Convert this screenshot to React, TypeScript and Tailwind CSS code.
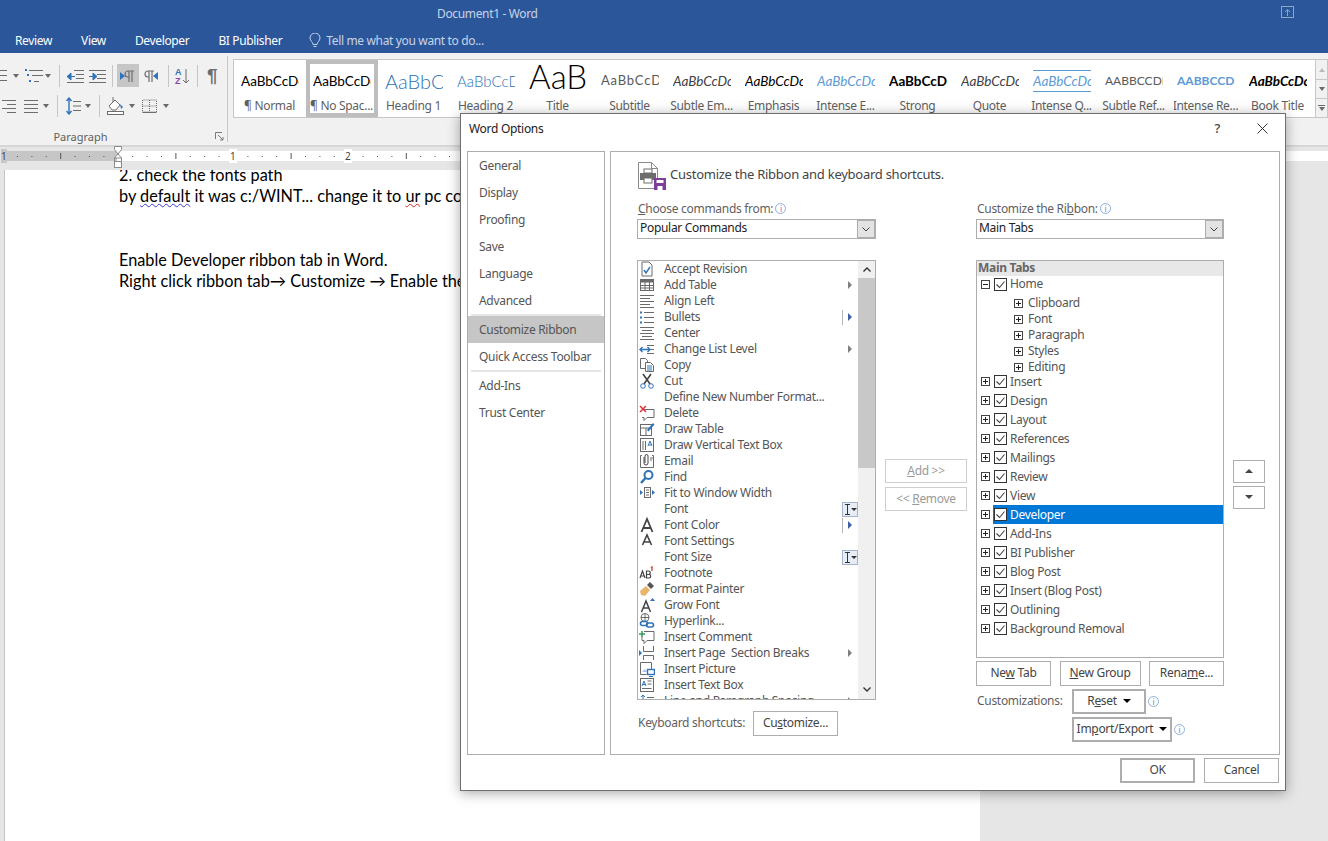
import type { ReactNode } from 'react'

const STYLES = [
  { label: '¶ Normal', cls: 'text-[13.5px] text-black' },
  { label: '¶ No Spac...', cls: 'text-[13.5px] text-black', selected: true },
  { label: 'Heading 1', cls: 'text-[20px] text-[#2e74b5] font-light' },
  { label: 'Heading 2', cls: 'text-[15px] text-[#2e74b5] font-light' },
  { label: 'Title', cls: 'text-[33px] text-black font-light leading-[33px] pb-[10px]' },
  { label: 'Subtitle', cls: 'text-[13px] text-[#5a5a5a] tracking-[0.8px]' },
  { label: 'Subtle Em...', cls: 'text-[13.5px] text-[#404040] italic' },
  { label: 'Emphasis', cls: 'text-[13.5px] text-black italic' },
  { label: 'Intense E...', cls: 'text-[13.5px] text-[#5b9bd5] italic' },
  { label: 'Strong', cls: 'text-[13.5px] text-black font-bold' },
  { label: 'Quote', cls: 'text-[13.5px] text-[#404040] italic' },
  { label: 'Intense Q...', cls: 'text-[13.5px] text-[#5b9bd5] italic border-y border-[#5b9bd5]' },
  { label: 'Subtle Ref...', cls: 'text-[12px] text-[#5a5a5a]' },
  { label: 'Intense Re...', cls: 'text-[12px] text-[#5b9bd5] font-bold' },
  { label: 'Book Title', cls: 'text-[13.5px] text-black font-bold italic' },
]

const PREVIEW: Record<string, string> = {
  'Heading 1': 'AaBbCc',
  'Heading 2': 'AaBbCcD',
  Title: 'AaB',
  'Subtle Ref...': 'AABBCCDE',
  'Intense Re...': 'AABBCCDE',
}

const NAV = [
  { label: 'General' },
  { label: 'Display' },
  { label: 'Proofing' },
  { label: 'Save' },
  { label: 'Language' },
  { label: 'Advanced', line: true },
  { label: 'Customize Ribbon', active: true },
  { label: 'Quick Access Toolbar', line: true },
  { label: 'Add-Ins' },
  { label: 'Trust Center' },
]

type Cmd = { label: string; icon?: string; arrow?: boolean; split?: boolean; beam?: boolean }

const COMMANDS: Cmd[] = [
  { label: 'Accept Revision', icon: 'accept' },
  { label: 'Add Table', icon: 'table', arrow: true },
  { label: 'Align Left', icon: 'left' },
  { label: 'Bullets', icon: 'bullets', split: true },
  { label: 'Center', icon: 'center' },
  { label: 'Change List Level', icon: 'level', arrow: true },
  { label: 'Copy', icon: 'copy' },
  { label: 'Cut', icon: 'cut' },
  { label: 'Define New Number Format...' },
  { label: 'Delete', icon: 'delete' },
  { label: 'Draw Table', icon: 'draw' },
  { label: 'Draw Vertical Text Box', icon: 'vbox' },
  { label: 'Email', icon: 'email' },
  { label: 'Find', icon: 'find' },
  { label: 'Fit to Window Width', icon: 'fit' },
  { label: 'Font', beam: true },
  { label: 'Font Color', icon: 'fontcolor', split: true },
  { label: 'Font Settings', icon: 'fontsettings' },
  { label: 'Font Size', beam: true },
  { label: 'Footnote', icon: 'footnote' },
  { label: 'Format Painter', icon: 'painter' },
  { label: 'Grow Font', icon: 'grow' },
  { label: 'Hyperlink...', icon: 'link' },
  { label: 'Insert Comment', icon: 'comment' },
  { label: 'Insert Page  Section Breaks', icon: 'breaks', arrow: true },
  { label: 'Insert Picture', icon: 'picture' },
  { label: 'Insert Text Box', icon: 'textbox' },
  { label: 'Line and Paragraph Spacing', icon: 'spacing', arrow: true },
]

const TABS = ['Insert', 'Design', 'Layout', 'References', 'Mailings', 'Review', 'View', 'Developer', 'Add-Ins', 'BI Publisher', 'Blog Post', 'Insert (Blog Post)', 'Outlining', 'Background Removal']

const GROUPS = ['Clipboard', 'Font', 'Paragraph', 'Styles', 'Editing']

function Glyph({ name }: { name: string }) {
  const g = '#6a6a6a'
  const b = '#2f73b8'
  switch (name) {
    case 'accept':
      return <><path d="M3 1h7l3 3v11H3z" fill="none" stroke={g} /><path d="M5 9l2 3 4-6" fill="none" stroke={b} strokeWidth="1.4" /></>
    case 'table':
      return <><rect x="1.5" y="2.5" width="13" height="11" fill="#fff" stroke={g} /><rect x="1.5" y="2.5" width="13" height="3" fill={g} /><path d="M1.5 8.5h13M1.5 11h13M6 5v8M10.5 5v8" stroke={g} /></>
    case 'left':
      return <path d="M1 2.5h14M1 5.5h10M1 8.5h14M1 11.5h10M1 14.5h14" stroke={g} />
    case 'center':
      return <path d="M1 2.5h14M3 5.5h10M1 8.5h14M3 11.5h10M1 14.5h14" stroke={g} />
    case 'bullets':
      return <><path d="M5 3.5h10M5 8.5h10M5 13.5h10" stroke={g} /><path d="M1 3.5h2M1 8.5h2M1 13.5h2" stroke={b} strokeWidth="2" /></>
    case 'level':
      return <><path d="M8 4.5h7M10 8.5h5M8 12.5h7" stroke={g} /><path d="M1 8.5h10M3.5 6L1 8.5 3.5 11M8.5 6L11 8.5 8.5 11" fill="none" stroke={b} strokeWidth="1.4" /></>
    case 'copy':
      return <><path d="M1.5 1.5h5l2 2v8h-7z" fill="#fff" stroke={g} /><path d="M6.5 5.5h5l3 3v6h-8z" fill="#fff" stroke={g} /><path d="M8 9h5M8 11h5M8 13h5" stroke={b} /></>
    case 'cut':
      return <><path d="M4 1l7 10M12 1L5 11" stroke="#444" strokeWidth="1.6" /><circle cx="4" cy="13" r="2.3" fill="none" stroke={b} /><circle cx="12" cy="13" r="2.3" fill="none" stroke={b} /></>
    case 'delete':
      return <><path d="M4 4.5h11v8H8l-3 3v-3H3" fill="none" stroke={g} /><path d="M1 1l6 6M7 1L1 7" stroke="#d33" strokeWidth="1.5" /></>
    case 'draw':
      return <><rect x="1.5" y="3.5" width="11" height="11" fill="#fff" stroke={g} /><path d="M1.5 7h11M7 7v7.500" stroke={g} /><path d="M8 9l6-7 1.500 1.500-6 7z" fill={b} /></>
    case 'vbox':
      return <><rect x="1.5" y="1.500" width="13" height="13" fill="#fff" stroke={g} /><path d="M4 4v9M6.500 4v9" stroke={g} /><path d="M9 9l2-5 2 5M10 8h2" fill="none" stroke={b} /></>
    case 'email':
      return <><path d="M3 2.500H1.500v12h13v-12H13" fill="none" stroke={g} /><path d="M5 4v6a2 2 0 004 0V3a1.500 1.500 0 00-3 0v7" fill="none" stroke="#444" /><path d="M11 5h3M11 7h2" stroke={g} /></>
    case 'find':
      return <><circle cx="9.500" cy="6" r="4" fill="#fff" stroke={b} strokeWidth="2" /><path d="M6.500 9L2 14" stroke={b} strokeWidth="2.500" /></>
    case 'fit':
      return <><rect x="5.500" y="2.500" width="6" height="10" fill="#fff" stroke={g} /><path d="M7 5h3M7 7.500h3M7 10h3" stroke={g} /><path d="M4 7.500L1 5v5zM13 5v5l3-2.500z" fill={b} /></>
    case 'fontcolor':
      return <path d="M2.500 15L8 2l5.500 13M4.500 11h7" fill="none" stroke="#444" strokeWidth="1.800" />
    case 'fontsettings':
      return <path d="M3.500 12L8 2l4.500 10M5 9h6" fill="none" stroke="#444" strokeWidth="1.600" />
    case 'footnote':
      return <><path d="M1 13l2.500-7L6 13M1.800 11h3.400M7.500 6v7h2.500a1.700 1.700 0 000-3.500H7.500h2a1.700 1.700 0 000-3.500z" fill="none" stroke="#444" strokeWidth="1.200" /><path d="M13 6V2l-1 1" fill="none" stroke="#c33" strokeWidth="1.200" /></>
    case 'painter':
      return <><path d="M1 10l6-5 4 4-5 6-4-1z" fill="#e8b56a" /><path d="M8 4l4 4 3-3-4-4z" fill="#555" /></>
    case 'grow':
      return <><path d="M2.500 15L7 4l4.500 11M4 11h6" fill="none" stroke="#444" strokeWidth="1.500" /><path d="M11 4l2.500-3L16 4z" fill={b} /></>
    case 'link':
      return <><circle cx="6" cy="4.500" r="4" fill="none" stroke={g} /><path d="M2 4.500h8M6 .5v8" stroke={g} /><rect x="1.500" y="8.500" width="7" height="4" rx="2" fill="none" stroke={b} strokeWidth="1.600" /><rect x="7.500" y="10" width="7" height="4" rx="2" fill="none" stroke={b} strokeWidth="1.600" /></>
    case 'comment':
      return <><path d="M5 2.500h10v9H8l-3 3v-3H3V7" fill="none" stroke={g} /><path d="M0 5h6M3 2v6" stroke="#3a9a5a" strokeWidth="1.500" /></>
    case 'breaks':
      return <><path d="M4.500 1v5.500h10V1M4.500 15V10.500h10V15" fill="none" stroke={g} /><path d="M0 5v6l3-3z" fill={b} /></>
    case 'picture':
      return <><path d="M1.500 1.500h11v9M1.500 1.500v12h6" fill="none" stroke={g} /><path d="M3 11l3-3 2 3z" fill="#aac6e6" /><rect x="8.500" y="8.500" width="7" height="5" fill="#fff" stroke={b} strokeWidth="1.400" /><path d="M10 15.500h4" stroke={b} /></>
    case 'textbox':
      return <><rect x="1.500" y="1.500" width="13" height="13" fill="#fff" stroke={g} /><path d="M3 9l2-5 2 5M3.800 7.500h2.400" fill="none" stroke={b} /><path d="M8.500 4h4M8.500 7h4M3 11.500h9.500" stroke={g} /></>
    case 'spacing':
      return <><path d="M4 2v10M2 4l2-2 2 2" fill="none" stroke={b} /><path d="M8 4.500h7M8 8h7" stroke={g} /></>
  }
  return null
}

function CmdIcon({ name }: { name: string }) {
  return (
    <svg className="shrink-0" width="16" height="16" viewBox="0 0 16 16">
      <Glyph name={name} />
    </svg>
  )
}

function Caret({ className = '' }: { className?: string }) {
  return (
    <svg className={`shrink-0 ${className}`} width="6" height="4" viewBox="0 0 6 4">
      <path d="M0 0h6L3 4z" fill="#6a6a6a" />
    </svg>
  )
}

function Sep({ className = '' }: { className?: string }) {
  return <div className={`w-px h-[22px] bg-[#c6c6c6] shrink-0 ${className}`} />
}

function Rib({ w, children, className = '' }: { w: number; children: ReactNode; className?: string }) {
  return (
    <svg className={`shrink-0 ${className}`} width={w} height="18" viewBox={`0 0 ${w} 18`}>
      {children}
    </svg>
  )
}

function ParagraphGroup() {
  const g = '#6d6d6d'
  const b = '#2f73b8'
  return (
    <div className="w-[228px] shrink-0 h-[86px] border-r border-[#c6c6c6] mt-[3px] relative">
      <div className="flex items-center h-[23px] mt-[8px]">
        <Rib w={7}><path d="M0 3.500h7M0 8.500h7M0 13.500h7" stroke={g} /></Rib>
        <Caret className="ml-[6px]" />
        <Rib w={19} className="ml-[5px]"><path d="M5 3.500h14M8 8.500h11M10 14.500h5" stroke={g} /><path d="M1 3h2M3 8h2M5 14h2" stroke={b} strokeWidth="2" /></Rib>
        <Caret className="ml-[2px]" />
        <Sep className="ml-[8px]" />
        <Rib w={17} className="ml-[7px]"><path d="M7 3.500h10M9 7.500h8M9 11.500h8M0 15.500h17" stroke={g} /><path d="M0 9.500L4 6v7zM4 9.500h4" fill={b} stroke={b} /></Rib>
        <Rib w={17} className="ml-[5px]"><path d="M0 3.500h17M8 7.500h9M8 11.500h9M0 15.500h17" stroke={g} /><path d="M8 9.500L4 6v7zM0 9.500h4" fill={b} stroke={b} /></Rib>
        <Sep className="ml-[6px]" />
        <div className="w-[22px] h-[23px] bg-[#c6c6c6] ml-[4px] flex items-center justify-center shrink-0">
          <Rib w={16}><path d="M0 5l5 4-5 4z" fill={b} /><path d="M9 4H8a3 3 0 000 6h1M9 4v11M12 4v11M8 4h6" fill="none" stroke={g} strokeWidth="1.200" /></Rib>
        </div>
        <Rib w={14} className="ml-[5px]"><path d="M5 4H4a3 3 0 000 6h1M5 4v11M8 4v11M4 4h6" fill="none" stroke={g} strokeWidth="1.200" /><path d="M14 5l-5 4 5 4z" fill={b} /></Rib>
        <Sep className="ml-[10px]" />
        <Rib w={15} className="ml-[6px]"><text x="0" y="8" fontSize="9" fontWeight="700" fill={b} fontFamily="Liberation Sans">A</text><text x="0" y="17" fontSize="9" fontWeight="700" fill="#8e44ad" fontFamily="Liberation Sans">Z</text><path d="M11 2v14M8 13l3 3 3-3" fill="none" stroke={g} /></Rib>
        <Sep className="ml-[7px]" />
        <span className="ml-[9px] text-[19px] leading-none font-bold text-[#6d6d6d]" style={{ fontFamily: '"Liberation Sans", sans-serif' }}>¶</span>
      </div>
      <div className="flex items-center h-[24px] mt-[7px]">
        <Rib w={14} className="ml-[2px]"><path d="M0 3.500h14M5 7.500h9M0 11.500h14M5 15.500h9" stroke={g} /></Rib>
        <Rib w={14} className="ml-[8px]"><path d="M0 3.500h14M0 7.500h14M0 11.500h14M0 15.500h14" stroke={g} /></Rib>
        <Caret className="ml-[5px]" />
        <Sep className="ml-[8px]" />
        <Rib w={15} className="ml-[8px]"><path d="M7 4.500h8M7 9h8M7 13.500h8" stroke={g} /><path d="M3 1v16M.5 4L3 1l2.500 3M.5 14L3 17l2.500-3" fill="none" stroke={b} strokeWidth="1.400" /></Rib>
        <Caret className="ml-[4px]" />
        <Sep className="ml-[8px]" />
        <Rib w={17} className="ml-[7px]"><path d="M2 9l6-6 5 5-4 5H5z" fill="#fff" stroke={g} /><path d="M6 0v5" stroke={g} /><path d="M13 7l3 3-2 2z" fill={b} /><rect x="0.500" y="14.500" width="16" height="3" fill="#fff" stroke={g} /></Rib>
        <Caret className="ml-[5px]" />
        <Rib w={15} className="ml-[7px]"><path d="M.5 3v12h14V3z" fill="none" stroke={g} strokeDasharray="1 1" /><path d="M7.500 3v12M.5 9h14" stroke={g} strokeDasharray="1 1" /><path d="M.5 15.500h14" stroke={g} /></Rib>
        <Caret className="ml-[6px]" />
      </div>
      <div className="flex items-center justify-center w-[161px] h-[14px] mt-[12px] text-[11px] text-[#5f5f5f]">Paragraph</div>
      <svg className="absolute left-[215px] bottom-[1px]" width="9" height="9" viewBox="0 0 9 9">
        <path d="M.5 7V.5H7M3 3l5 5M5 8h3V5" fill="none" stroke="#7a7a7a" />
      </svg>
    </div>
  )
}

function Gallery() {
  return (
    <div className="w-[1095px] shrink-0 ml-[5px] mt-[6px] h-[59px] flex border border-[#c6c6c6] bg-white">
      <div className="flex w-[1081px] overflow-hidden">
        {STYLES.map(s => (
          <div key={s.label} className={`w-[72px] shrink-0 h-[57px] flex flex-col items-center overflow-hidden ${s.selected ? 'border-[4px] border-[#bdbdbd]' : 'border-[4px] border-transparent'}`}>
            <div className="h-[34px] w-[58px] shrink-0 overflow-hidden flex items-center whitespace-nowrap" style={{ fontFamily: 'Lato, sans-serif' }}>
              <span className={s.cls}>{PREVIEW[s.label] ?? 'AaBbCcDc'}</span>
            </div>
            <div className="text-[12px] leading-[15px] tracking-[-0.3px] text-[#5f5f5f] whitespace-nowrap pr-px">{s.label}</div>
          </div>
        ))}
      </div>
      <div className="flex-1 flex flex-col border-l border-[#c6c6c6] bg-[#f1f1f1]">
        <div className="h-[20px] flex items-center justify-center border-b border-[#c6c6c6]"><span className="w-0 h-0 border-x-[3px] border-x-transparent border-b-[4px] border-b-[#bbb]" /></div>
        <div className="h-[19px] flex items-center justify-center border-b border-[#c6c6c6]"><Caret /></div>
        <div className="flex-1 flex flex-col items-center justify-center gap-[1px]"><div className="w-[7px] h-px bg-[#666]" /><Caret /></div>
      </div>
    </div>
  )
}

function Ruler() {
  const ticks: number[] = []
  for (let x = 3.1; x < 460; x += 14.4) ticks.push(x)
  return (
    <div className="h-[25px] bg-[#e6e6e6] border-t-2 border-[#d6d6d6] pt-[4px] relative">
      <div className="flex h-[10px]">
        <div className="w-[3px] bg-[#e6e6e6]" />
        <div className="w-[114px] bg-[#c6c6c6]" />
        <div className="flex-1 bg-white" />
      </div>
      <svg className="absolute left-0 top-[4px]" width="460" height="10" viewBox="0 0 460 10">
        {ticks.map((x, i) => (
          i % 8 === 4
            ? <path key={x} d={`M${x.toFixed(1)} 2v6`} stroke="#555" />
            : <path key={x} d={`M${x.toFixed(1)} 5v1`} stroke="#555" />
        ))}
      </svg>
      <span className="absolute left-[1px] top-[2px] text-[10px] leading-[14px] text-[#444] bg-[#c6c6c6]">1</span>
      <span className="absolute left-[229px] top-[2px] text-[10px] leading-[14px] text-[#444] bg-white px-px">1</span>
      <span className="absolute left-[344px] top-[2px] text-[10px] leading-[14px] text-[#444] bg-white px-px">2</span>
      <svg className="absolute left-[114px] top-[-1px]" width="8" height="24" viewBox="0 0 8 24">
        <path d="M.5.5h7v3L4 8 7.500 12H.5L4 8 .5 3.500z" fill="#fff" stroke="#8a8a8a" />
        <rect x="0.500" y="15.500" width="7" height="6" fill="#fff" stroke="#8a8a8a" />
        <path d="M.5 12v3.500M7.500 12v3.500" stroke="#8a8a8a" />
      </svg>
    </div>
  )
}

function InfoDot() {
  return (
    <span className="inline-flex w-[11px] h-[11px] rounded-full border border-[#8fb0dc] items-center justify-center shrink-0">
      <span className="text-[8px] leading-none text-[#5a86c0]">i</span>
    </span>
  )
}

function Btn({ className = '', children, disabled }: { className?: string; children: ReactNode; disabled?: boolean }) {
  return (
    <div className={`flex items-center justify-center pb-px border ${disabled ? 'border-[#cfcfcf] text-[#9a9a9a]' : 'border-[#adadad] text-[#444]'} bg-white ${className}`}>
      {children}
    </div>
  )
}

function Combo({ value, label }: { value: string; label: ReactNode }) {
  return (
    <>
      <div className="h-[18px] pb-px pl-px flex items-center gap-[2px] text-[#5f5f5f]">{label}<InfoDot /></div>
      <div className="mt-[1px] h-[20px] flex border border-[#adadad] bg-white">
        <div className="flex-1 pl-[2px] leading-[16px] text-[#222]">{value}</div>
        <div className="w-[18px] bg-[#e3e3e3] border-l border-[#adadad] border-y border-r flex items-center justify-center">
          <svg width="8" height="5" viewBox="0 0 8 5"><path d="M.5.5L4 4 7.500.5" fill="none" stroke="#444" /></svg>
        </div>
      </div>
    </>
  )
}

function CommandList() {
  return (
    <div className="mt-[21px] h-[440px] flex border border-[#adadad] bg-white overflow-hidden">
      <div className="flex-1 min-w-0">
        {COMMANDS.map(c => (
          <div key={c.label} className="h-[16px] flex items-center relative">
            <div className="w-[16px] ml-px shrink-0 flex justify-center">{c.icon && <CmdIcon name={c.icon} />}</div>
            <span className="ml-[9px] text-[#555] whitespace-pre leading-[16px]">{c.label}</span>
            {c.arrow && <span className="absolute right-[6px] w-0 h-0 border-y-[4px] border-y-transparent border-l-[4px] border-l-[#808080]" />}
            {c.split && (
              <>
                <span className="absolute right-[15px] w-px h-[15px] bg-[#b5b5b5]" />
                <span className="absolute right-[6px] w-0 h-0 border-y-[4px] border-y-transparent border-l-[4px] border-l-[#3f5fa8]" />
              </>
            )}
            {c.beam && (
              <span className="absolute right-0 w-[16px] h-[15px] border border-[#a8b4cc] bg-[#e8ecf5] flex items-center pl-[2px] gap-px text-[#444]">
                <svg width="5" height="11" viewBox="0 0 5 11"><path d="M0 .5h5M0 10.500h5M2.500 .5v10" stroke="#333" /></svg>
                <span className="w-0 h-0 border-x-[3px] border-x-transparent border-t-[3px] border-t-[#333]" />
              </span>
            )}
          </div>
        ))}
      </div>
      <div className="w-[17px] shrink-0 bg-[#f0f0f0] flex flex-col">
        <div className="h-[17px] flex items-center justify-center">
          <svg width="8" height="5" viewBox="0 0 8 5"><path d="M.5 4.500L4 1l3.500 3.500" fill="none" stroke="#333" strokeWidth="1.400" /></svg>
        </div>
        <div className="h-[190px] bg-[#c8c8c8] mx-0" />
        <div className="flex-1" />
        <div className="h-[20px] flex items-center justify-center">
          <svg width="8" height="5" viewBox="0 0 8 5"><path d="M.5.5L4 4l3.500-3.500" fill="none" stroke="#333" strokeWidth="1.400" /></svg>
        </div>
      </div>
    </div>
  )
}

function Expander({ open }: { open?: boolean }) {
  return (
    <svg className="shrink-0" width="9" height="9" viewBox="0 0 9 9">
      <rect x="0.500" y="0.500" width="8" height="8" fill="#fff" stroke="#444" />
      <path d="M2 4.500h5" stroke="#222" />
      {!open && <path d="M4.500 2v5" stroke="#222" />}
    </svg>
  )
}

function Check() {
  return (
    <svg className="shrink-0" width="13" height="13" viewBox="0 0 13 13">
      <rect x="0.500" y="0.500" width="12" height="12" fill="#fff" stroke="#333" />
      <path d="M2.500 6.500l3 3 5-6" fill="none" stroke="#444" strokeWidth="1.100" />
    </svg>
  )
}

function TabTree() {
  return (
    <div className="mt-[21px] h-[398px] border border-[#adadad] bg-white">
      <div className="h-[15px] bg-[#e8e8e8] font-bold leading-[14px] pl-px text-[#666]">Main Tabs</div>
      <div className="h-[16px] flex items-center pl-[4px]">
        <Expander open />
        <div className="ml-[4px]"><Check /></div>
        <span className="ml-[3px] text-[#555]">Home</span>
      </div>
      <div className="pt-[3px]">
        {GROUPS.map(g => (
          <div key={g} className="h-[16px] flex items-center pl-[37px] text-[#555]">
            <Expander />
            <span className="ml-[5px]">{g}</span>
          </div>
        ))}
      </div>
      <div className="-mt-[3px]">
        {TABS.map(t => (
          <div key={t} className="h-[19px] flex items-center pl-[4px]">
            <Expander />
            <div className={`ml-[3px] flex-1 h-[19px] flex items-center pl-px ${t === 'Developer' ? 'bg-[#0078d7] text-white' : 'text-[#555]'}`}>
              <Check />
              <span className="ml-[3px]">{t}</span>
            </div>
          </div>
        ))}
      </div>
    </div>
  )
}

function WordOptions() {
  return (
    <div
      className="absolute left-[460px] top-[113px] w-[826px] h-[678px] bg-white border border-[#6f6f6f] shadow-[0_2px_12px_rgba(0,0,0,0.35)] flex flex-col text-[12px] z-10"
      style={{ fontFamily: '"Noto Sans", sans-serif', letterSpacing: '-0.3px' }}
    >
      <div className="h-[37px] shrink-0 flex items-start">
        <span className="ml-[8px] mt-[6px] text-[#222]">Word Options</span>
        <span className="ml-auto mt-[5px] text-[13px] font-medium text-[#444]">?</span>
        <svg className="ml-[37px] mt-[9px] mr-[17px]" width="11" height="11" viewBox="0 0 11 11">
          <path d="M.5.5l10 10M10.500.5l-10 10" stroke="#333" />
        </svg>
      </div>

      <div className="flex gap-[5px] pl-[6px]">
        <div className="w-[138px] h-[604px] border border-[#adadad] shrink-0">
          {NAV.map(n => (
            <div key={n.label}>
              <div className={`h-[27px] flex items-center pl-[11px] text-[#555] ${n.active ? 'bg-[#c6c6c6] text-[#333]' : ''}`}>{n.label}</div>
              {n.line && <div className="h-[2px] bg-[#e6e6e6] mx-[3px]" />}
            </div>
          ))}
        </div>

        <div className="w-[670px] h-[604px] border border-[#adadad] shrink-0 pl-[26px] pt-[8px]">
          <div className="h-[31px] flex items-center">
            <svg width="30" height="30" viewBox="0 0 30 30" className="shrink-0">
              <path d="M1.500 1.500h13l6 6v20h-19z" fill="#fff" stroke="#8a8a8a" />
              <path d="M14.500 1.500v6h6" fill="none" stroke="#8a8a8a" />
              <rect x="3" y="12" width="16" height="7" fill="#6d6d6d" />
              <rect x="7" y="8" width="8" height="4" fill="#fff" stroke="#6d6d6d" />
              <rect x="7" y="17" width="8" height="5" fill="#fff" stroke="#6d6d6d" />
              <rect x="17" y="17" width="12" height="12" fill="#7f3f98" />
              <rect x="19.500" y="19" width="7" height="3" fill="#fff" />
              <rect x="20.500" y="25" width="5" height="4" fill="#fff" />
            </svg>
            <span className="ml-[3px] pb-[2px] text-[13px] tracking-[-0.26px] text-[#444]">Customize the Ribbon and keyboard shortcuts.</span>
          </div>

          <div className="flex mt-[9px]">
            <div className="w-[239px] shrink-0">
              <Combo value="Popular Commands" label={<span><span className="underline">C</span>hoose commands from:</span>} />
              <CommandList />
              <div className="flex items-center h-[25px] mt-[11px]">
                <span className="w-[116px] text-[#5f5f5f] pl-px pb-px">Keyboard shortcuts:</span>
                <Btn className="w-[85px] h-[25px]"><span>Cu<span className="underline">s</span>tomize...</span></Btn>
              </div>
            </div>

            <div className="w-[82px] ml-[9px] shrink-0 pt-[259px]">
              <Btn disabled className="h-[24px]"><span><span className="underline">A</span>dd &gt;&gt;</span></Btn>
              <Btn disabled className="h-[24px] mt-[4px]"><span>&lt;&lt; <span className="underline">R</span>emove</span></Btn>
            </div>

            <div className="w-[248px] ml-[9px] shrink-0">
              <Combo value="Main Tabs" label={<span>Customize the Ri<span className="underline">b</span>bon:</span>} />
              <TabTree />
              <div className="flex justify-between mt-[3px]">
                <Btn className="w-[75px] h-[25px]"><span>Ne<span className="underline">w</span> Tab</span></Btn>
                <Btn className="w-[81px] h-[25px]"><span><span className="underline">N</span>ew Group</span></Btn>
                <Btn className="w-[75px] h-[25px]"><span>Rena<span className="underline">m</span>e...</span></Btn>
              </div>
              <div className="flex mt-[3px]">
                <span className="w-[96px] pl-px pt-[3px] text-[#5f5f5f]">Customizations:</span>
                <div className="flex flex-col gap-[3px]">
                  <div className="flex items-center gap-[2px]">
                    <Btn className="w-[74px] h-[25px] border-[2px]"><span>R<span className="underline">e</span>set</span><span className="ml-[6px] w-0 h-0 border-x-[4px] border-x-transparent border-t-[4px] border-t-black" /></Btn>
                    <InfoDot />
                  </div>
                  <div className="flex items-center gap-[2px]">
                    <Btn className="w-[100px] h-[25px] border-[2px]"><span>Im<span className="underline">p</span>ort/Export</span><span className="ml-[6px] w-0 h-0 border-x-[4px] border-x-transparent border-t-[4px] border-t-black" /></Btn>
                    <InfoDot />
                  </div>
                </div>
              </div>
            </div>

            <div className="w-[32px] ml-[9px] shrink-0 pt-[260px]">
              <Btn className="h-[23px]"><span className="w-0 h-0 border-x-[4px] border-x-transparent border-b-[4px] border-b-[#444]" /></Btn>
              <Btn className="h-[23px] mt-[3px]"><span className="w-0 h-0 border-x-[4px] border-x-transparent border-t-[4px] border-t-[#444]" /></Btn>
            </div>
          </div>
        </div>
      </div>

      <div className="flex justify-end gap-[9px] pr-[6px] mt-[3px]">
        <Btn className="w-[75px] h-[25px] border-[2px]">OK</Btn>
        <Btn className="w-[75px] h-[25px]">Cancel</Btn>
      </div>
    </div>
  )
}

export default function App() {
  return (
    <div className="relative w-[1328px] h-[841px] overflow-hidden bg-[#e6e6e6]" style={{ fontFamily: '"Noto Sans", sans-serif' }}>
      <div className="h-[53px] bg-[#2b579a] relative text-[12px] tracking-[-0.35px]">
        <div className="h-[27px] flex items-center pl-[437px] text-[#c6d4e8]">Document1 - Word</div>
        <div className="flex items-center h-[26px] text-white pt-[2px]">
          <span className="ml-[15px]">Review</span>
          <span className="ml-[29px]">View</span>
          <span className="ml-[29px]">Developer</span>
          <span className="ml-[29px]">BI Publisher</span>
          <svg className="ml-[27px]" width="12" height="16" viewBox="0 0 12 16">
            <path d="M4 11.500C4 9 1 8 1 5a5 5 0 0110 0c0 3-3 4-3 6.500zM4.500 13.500h3" fill="none" stroke="#c6d4e8" />
          </svg>
          <span className="ml-[5px] text-[#c6d4e8]">Tell me what you want to do...</span>
        </div>
        <svg className="absolute left-[1281px] top-[6px]" width="13" height="13" viewBox="0 0 13 13">
          <rect x="0.500" y="0.500" width="12" height="11" fill="none" stroke="#8ea6c9" />
          <path d="M6.500 10V4M4 6l2.500-2.500L9 6" fill="none" stroke="#8ea6c9" />
        </svg>
      </div>

      <div className="h-[92px] bg-[#f1f1f1] flex text-[12px]">
        <ParagraphGroup />
        <Gallery />
      </div>

      <Ruler />

      <div className="flex h-[671px]">
        <div className="w-[5px] shrink-0 border-r border-[#c6c6c6]" />
        <div className="w-[975px] shrink-0 bg-white overflow-hidden pl-[114px] relative" style={{ fontFamily: 'Lato, sans-serif' }}>
          <div className="text-[16.3px] leading-[21.3px] text-black -mt-[6px] whitespace-pre">
            <div>2. check the fonts path</div>
            <div>by <span className="underline decoration-wavy decoration-[#3a3ad0] decoration-1">default</span> it was c:/WINT... change it to <span className="underline decoration-wavy decoration-[#e02020] decoration-1">ur</span> pc computer</div>
            <div>&nbsp;</div>
            <div>&nbsp;</div>
            <div>Enable Developer ribbon tab in Word.</div>
            <div>Right click ribbon tab→ Customize → Enable the Developer tab</div>
          </div>
        </div>
      </div>

      <WordOptions />
    </div>
  )
}
